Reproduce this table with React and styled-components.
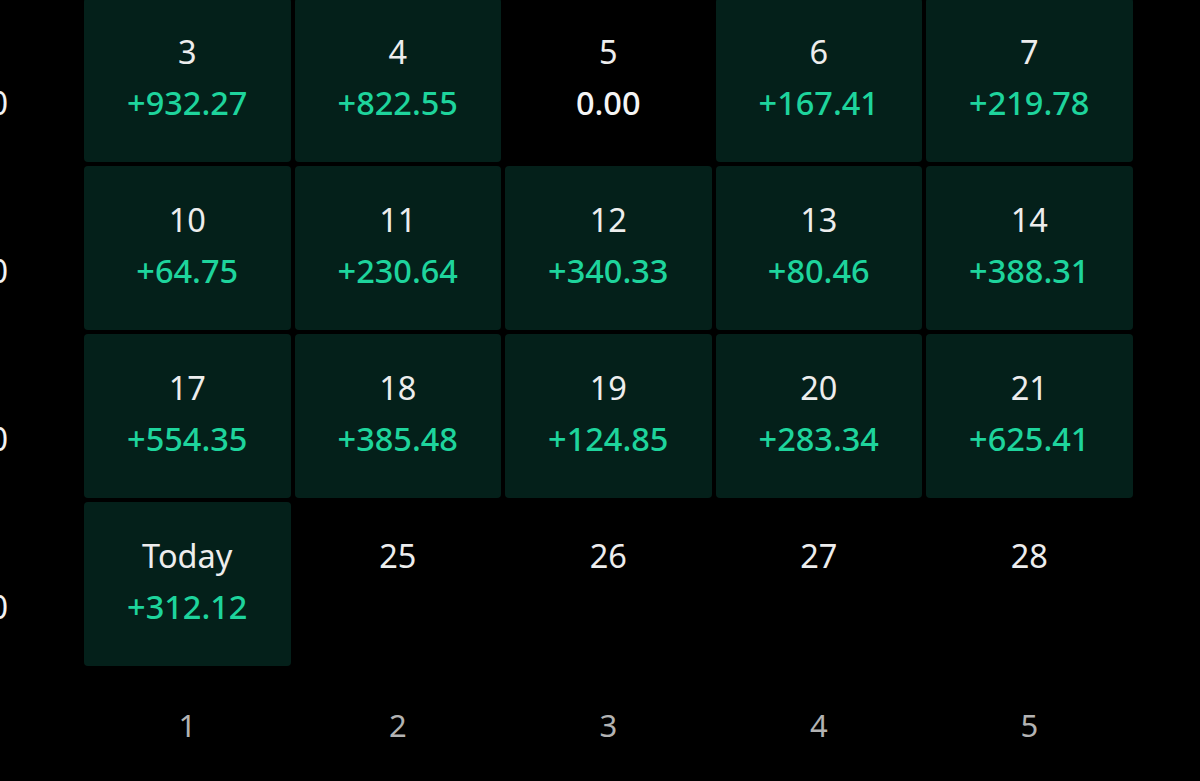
import React from 'react';
import styled, { createGlobalStyle } from 'styled-components';

const GlobalStyle = createGlobalStyle`
	html, body {
		margin: 0;
		padding: 0;
		background: #000;
		overflow: hidden;
	}
	body {
		font-family: "Noto Sans", "Open Sans", sans-serif;
	}
`;

const Screen = styled.div`
	width: 1200px;
	height: 781px;
	background: #000;
	overflow: hidden;
`;

const CalendarGrid = styled.div`
	display: grid;
	grid-template-columns: 80px repeat(5, 206.5px);
	grid-auto-rows: 164px;
	gap: 4px;
	margin-top: -2px;
`;

const WeekTotal = styled.div`
	display: flex;
	justify-content: flex-end;
	align-items: flex-start;
	padding-top: 80px;
	padding-right: 72px;
	white-space: nowrap;
	color: #f2f2f2;
	font-size: 32px;
	line-height: 50px;
	font-weight: 400;
`;

const DayCell = styled.div`
	display: flex;
	flex-direction: column;
	align-items: center;
	padding-top: 29px;
	border-radius: 4px;
	background: ${({ $filled }) => ($filled ? '#04201a' : 'transparent')};
`;

const DayNumber = styled.span`
	color: #ededed;
	font-size: 32.5px;
	line-height: 50px;
	font-weight: 400;
`;

const DayValue = styled.span`
	color: ${({ $zero }) => ($zero ? '#f5f5f5' : '#1ed49c')};
	font-size: 32.5px;
	line-height: 52px;
	font-weight: 500;
`;

const WeekdayRow = styled.div`
	display: grid;
	grid-template-columns: 80px repeat(5, 206.5px);
	gap: 4px;
	padding-top: 34px;
`;

const WeekdayLabel = styled.span`
	text-align: center;
	color: #b3b3b3;
	font-size: 31px;
	line-height: 50px;
`;

const weeks = [
	{
		total: '+2,140',
		days: [
			{ label: '3', value: '+932.27' },
			{ label: '4', value: '+822.55' },
			{ label: '5', value: '0.00', zero: true },
			{ label: '6', value: '+167.41' },
			{ label: '7', value: '+219.78' },
		],
	},
	{
		total: '+1,100',
		days: [
			{ label: '10', value: '+64.75' },
			{ label: '11', value: '+230.64' },
			{ label: '12', value: '+340.33' },
			{ label: '13', value: '+80.46' },
			{ label: '14', value: '+388.31' },
		],
	},
	{
		total: '+1,970',
		days: [
			{ label: '17', value: '+554.35' },
			{ label: '18', value: '+385.48' },
			{ label: '19', value: '+124.85' },
			{ label: '20', value: '+283.34' },
			{ label: '21', value: '+625.41' },
		],
	},
	{
		total: '+310',
		days: [
			{ label: 'Today', value: '+312.12' },
			{ label: '25' },
			{ label: '26' },
			{ label: '27' },
			{ label: '28' },
		],
	},
];

const App = () => {
	return (
		<Screen>
			<GlobalStyle />
			<CalendarGrid>
				{weeks.map((week) => (
					<React.Fragment key={week.days[0].label}>
						<WeekTotal>{week.total}</WeekTotal>
						{week.days.map((day) => (
							<DayCell key={day.label} $filled={!!day.value && !day.zero}>
								<DayNumber>{day.label}</DayNumber>
								{day.value && <DayValue $zero={day.zero}>{day.value}</DayValue>}
							</DayCell>
						))}
					</React.Fragment>
				))}
			</CalendarGrid>
			<WeekdayRow>
				<span />
				{[1, 2, 3, 4, 5].map((n) => (
					<WeekdayLabel key={n}>{n}</WeekdayLabel>
				))}
			</WeekdayRow>
		</Screen>
	);
};

export default App;
